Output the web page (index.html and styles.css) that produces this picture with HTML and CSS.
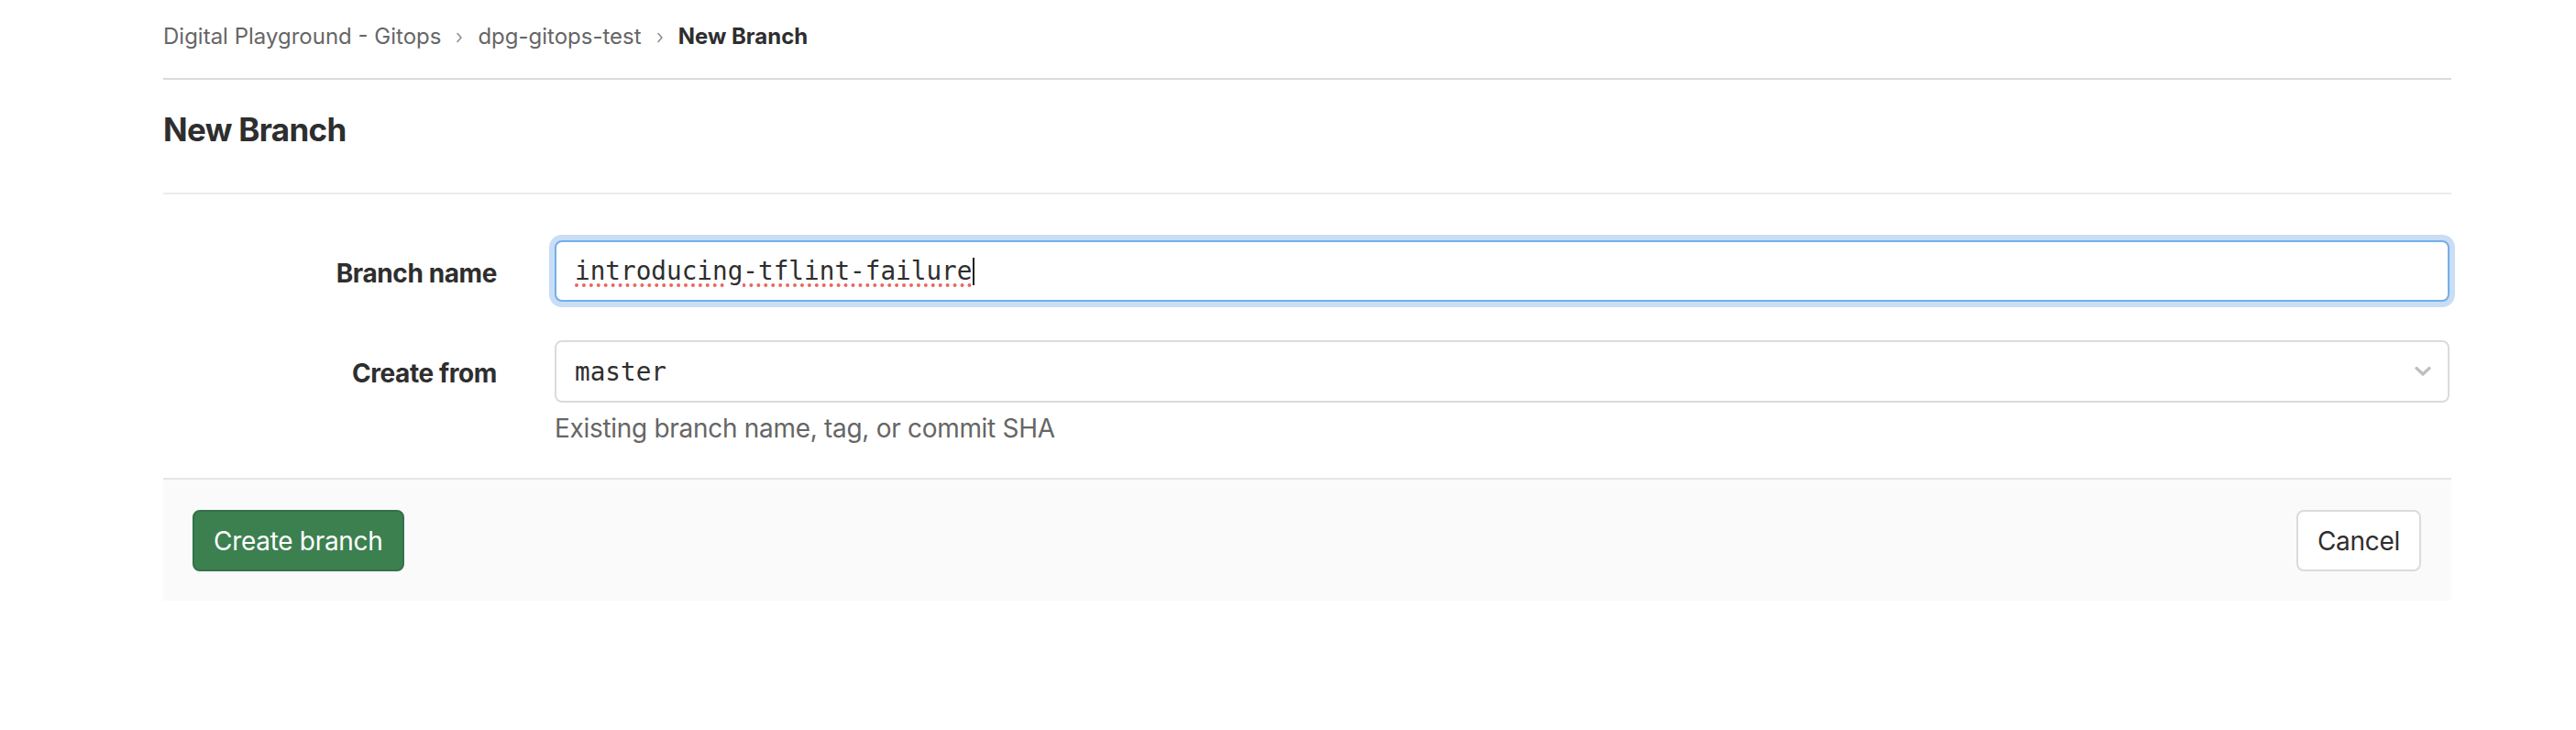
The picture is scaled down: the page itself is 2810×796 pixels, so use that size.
FILE: index.html
```html
<!DOCTYPE html>
<html lang="en">
<head>
<meta charset="utf-8">
<title>New Branch</title>
<link rel="stylesheet" href="styles.css">
</head>
<body>
<div class="page">
  <nav class="breadcrumbs">
    <a class="crumb" href="#">Digital Playground - Gitops</a>
    <svg class="sep" width="8" height="12" viewBox="0 0 8 12"><path d="M2 1.5 L6 6 L2 10.5" fill="none" stroke="#8f8f8f" stroke-width="1.6" stroke-linecap="round" stroke-linejoin="round"/></svg>
    <a class="crumb" href="#">dpg-gitops-test</a>
    <svg class="sep" width="8" height="12" viewBox="0 0 8 12"><path d="M2 1.5 L6 6 L2 10.5" fill="none" stroke="#8f8f8f" stroke-width="1.6" stroke-linecap="round" stroke-linejoin="round"/></svg>
    <span class="crumb current">New Branch</span>
  </nav>

  <h3 class="page-title">New Branch</h3>

  <form class="branch-form">
    <div class="form-body">
      <label class="field-label">Branch name</label>
      <div class="field">
        <div class="text-input focused"><span class="typed">introducing-tflint-failure</span><span class="caret"></span></div>
      </div>

      <label class="field-label">Create from</label>
      <div class="field">
        <div class="select-input">
          <span class="select-value">master</span>
          <svg class="chevron" width="18" height="12" viewBox="0 0 18 12"><path d="M2 2.5 L9 9 L16 2.5" fill="none" stroke="#bfbfbf" stroke-width="3.2" stroke-linecap="round" stroke-linejoin="round"/></svg>
        </div>
        <p class="help">Existing branch name, tag, or commit SHA</p>
      </div>
    </div>

    <div class="form-actions">
      <button type="button" class="btn btn-success">Create branch</button>
      <button type="button" class="btn btn-cancel">Cancel</button>
    </div>
  </form>
</div>
</body>
</html>
```

FILE: styles.css
```css
* { box-sizing: border-box; }

html, body {
  margin: 0;
  padding: 0;
  background: #ffffff;
}

body {
  font-family: Inter, "Liberation Sans", sans-serif;
  color: #2e2e2e;
}

.page {
  margin-left: 178px;
  width: 2496px;
}

.breadcrumbs {
  display: flex;
  align-items: center;
  height: 87px;
  padding-bottom: 6px;
  border-bottom: 2px solid #dbdbdb;
  font-size: 24px;
  line-height: 32px;
}

.crumb {
  color: #666666;
  text-decoration: none;
}

.crumb.current {
  color: #2e2e2e;
  font-weight: 700;
}

.sep {
  margin: 2px 16px 0 16px;
  display: block;
}

.page-title {
  margin: 0;
  padding: 30px 0 45px 0;
  font-size: 35px;
  line-height: 48px;
  font-weight: 700;
  letter-spacing: -0.7px;
  color: #2e2e2e;
  border-bottom: 2px solid #ececec;
}

.branch-form {
  margin: 0;
}

.form-body {
  display: grid;
  grid-template-columns: 364px 1fr;
  column-gap: 63px;
  row-gap: 42px;
  padding: 50px 2px 34px 0;
}

.field-label {
  justify-self: end;
  align-self: start;
  font-size: 28px;
  line-height: 34px;
  font-weight: 700;
  letter-spacing: -0.4px;
  color: #2e2e2e;
  padding-top: 19px;
}

.field {
  min-width: 0;
}

.text-input,
.select-input {
  display: flex;
  align-items: center;
  height: 67px;
  padding: 0 20px;
  border: 2px solid #dbdbdb;
  border-radius: 8px;
  background: #ffffff;
  font-family: "DejaVu Sans Mono", "Liberation Mono", monospace;
  font-size: 27.7px;
  color: #2e2e2e;
}

.text-input.focused {
  border-color: #73afea;
  box-shadow: 0 0 0 6px #c9ddf5;
}

.typed {
  text-decoration: underline dotted #e8675f;
  text-decoration-thickness: 4px;
  text-underline-offset: 4px;
}

.caret {
  display: inline-block;
  width: 2px;
  height: 30px;
  margin-left: 1px;
  background: #1f1f1f;
}

.select-input {
  justify-content: space-between;
  height: 68px;
  padding-right: 18px;
}

.chevron {
  display: block;
}

.help {
  margin: 8px 0 0 0;
  font-size: 28px;
  line-height: 40px;
  letter-spacing: -0.3px;
  color: #666666;
}

.form-actions {
  display: flex;
  justify-content: space-between;
  align-items: center;
  padding: 33px 33px 32px 32px;
  background: #fafafa;
  border-top: 2px solid #e5e5e5;
}

.btn {
  height: 67px;
  padding: 0 21px;
  border-radius: 8px;
  font-family: Inter, "Liberation Sans", sans-serif;
  font-size: 28px;
  line-height: 34px;
  letter-spacing: -0.3px;
  cursor: pointer;
}

.btn-success {
  background: #3c8050;
  border: 2px solid #33714a;
  color: #ffffff;
}

.btn-cancel {
  background: #ffffff;
  border: 2px solid #dbdbdb;
  color: #2e2e2e;
}
```
